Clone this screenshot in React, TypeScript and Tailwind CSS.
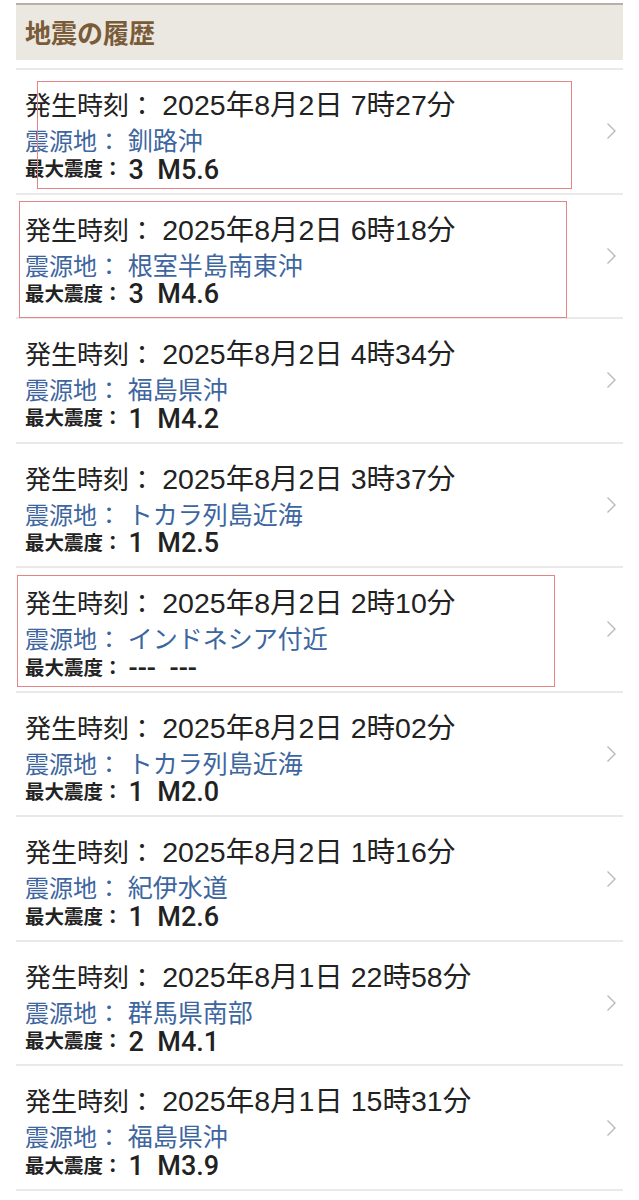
import React from "react";

type Quake = {
  time: string;
  place: string;
  shindo: string;
  mag: string;
};

const quakes: Quake[] = [
  { time: "2025年8月2日 7時27分", place: "釧路沖", shindo: "3", mag: "M5.6" },
  { time: "2025年8月2日 6時18分", place: "根室半島南東沖", shindo: "3", mag: "M4.6" },
  { time: "2025年8月2日 4時34分", place: "福島県沖", shindo: "1", mag: "M4.2" },
  { time: "2025年8月2日 3時37分", place: "トカラ列島近海", shindo: "1", mag: "M2.5" },
  { time: "2025年8月2日 2時10分", place: "インドネシア付近", shindo: "---", mag: "---" },
  { time: "2025年8月2日 2時02分", place: "トカラ列島近海", shindo: "1", mag: "M2.0" },
  { time: "2025年8月2日 1時16分", place: "紀伊水道", shindo: "1", mag: "M2.6" },
  { time: "2025年8月1日 22時58分", place: "群馬県南部", shindo: "2", mag: "M4.1" },
  { time: "2025年8月1日 15時31分", place: "福島県沖", shindo: "1", mag: "M3.9" },
];

function Chevron() {
  return (
    <svg width="11" height="18" viewBox="0 0 11 18" fill="none" className="shrink-0">
      <polyline points="1.5,1.5 9,9 1.5,16.5" stroke="#b9b9b9" strokeWidth="1.4" />
    </svg>
  );
}

function QuakeRow({ q }: { q: Quake }) {
  return (
    <a
      href="#"
      className="flex h-[124.56px] items-center border-t-2 border-[#e9e9e9] pl-[9px] pr-[6px]"
    >
      <div className="flex-1 self-stretch pt-[17px]">
        <p className="h-[36px] whitespace-nowrap leading-[36px] text-[#222]">
          <span className="text-[26px]">発生時刻： </span>
          <span className="text-[28.5px]">{q.time}</span>
        </p>
        <p className="h-[36px] whitespace-nowrap leading-[36px] text-[#3d66a0]">
          <span className="text-[24px]">震源地： </span>
          <span className="text-[25px]">{q.place}</span>
        </p>
        <p className="flex h-[22px] items-center text-[#222]">
          <span className="text-[19.5px] font-bold">最大震度：</span>
          <span className="ml-[6px] font-['Roboto'] text-[27px] font-medium">
            {q.shindo}&nbsp;&nbsp;{q.mag}
          </span>
        </p>
      </div>
      <Chevron />
    </a>
  );
}

export default function App() {
  return (
    <div
      className="relative min-h-[1200px] bg-white px-4 pt-[3px]"
      style={{ fontFamily: '"Liberation Sans", "Noto Sans CJK JP", sans-serif' }}
    >
      <div className="h-[57px] border-t-2 border-[#b6b0a6] bg-[#ebe7e1] pl-[9px]">
        <h2 className="text-[26px] font-bold leading-[58px] text-[#7a5b38]">地震の履歴</h2>
      </div>

      <div className="mt-[8px] border-b-2 border-[#e9e9e9]">
        {quakes.map((q) => (
          <QuakeRow key={q.time} q={q} />
        ))}
      </div>

      {/* hand-drawn highlight boxes */}
      <div className="pointer-events-none absolute left-[37px] top-[81px] h-[108px] w-[535px] border-[1.5px] border-[#e38585]" />
      <div className="pointer-events-none absolute left-[19px] top-[201px] h-[117px] w-[548px] border-[1.5px] border-[#e38585]" />
      <div className="pointer-events-none absolute left-[17px] top-[575px] h-[112px] w-[538px] border-[1.5px] border-[#e38585]" />
    </div>
  );
}
